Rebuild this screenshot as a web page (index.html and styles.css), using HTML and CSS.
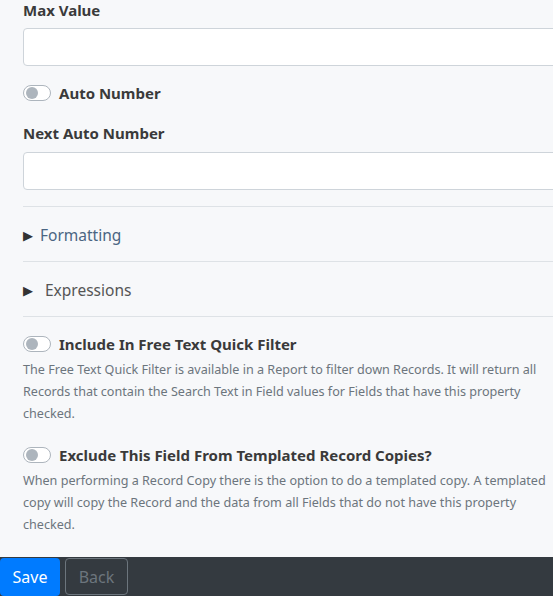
FILE: index.html
```html
<!DOCTYPE html>
<html lang="en">
<head>
    <meta charset="UTF-8">
    <meta name="viewport" content="width=device-width, initial-scale=1.0">
    <title>Field Properties</title>
    <link rel="stylesheet" href="styles.css">
</head>
<body>
    <div class="form">
        <!-- 数值字段 -->
        <label class="label">Max Value</label>
        <input class="input" type="text">

        <div class="switch-row">
            <span class="switch"></span>
            <span class="switch-label">Auto Number</span>
        </div>

        <label class="label label-next">Next Auto Number</label>
        <input class="input" type="text">

        <!-- 折叠区域 -->
        <div class="sections">
            <div class="section">
                <span class="arrow">&#9654;</span>
                <span class="section-link">Formatting</span>
            </div>
            <div class="section">
                <span class="arrow">&#9654;</span>
                <span class="section-text">Expressions</span>
            </div>
        </div>

        <div class="option">
            <div class="switch-row">
                <span class="switch"></span>
                <span class="switch-label">Include In Free Text Quick Filter</span>
            </div>
            <p class="help">The Free Text Quick Filter is available in a Report to filter down Records. It will return all Records that contain the Search Text in Field values for Fields that have this property checked.</p>
        </div>

        <div class="option option-last">
            <div class="switch-row">
                <span class="switch"></span>
                <span class="switch-label">Exclude This Field From Templated Record Copies?</span>
            </div>
            <p class="help">When performing a Record Copy there is the option to do a templated copy. A templated copy will copy the Record and the data from all Fields that do not have this property checked.</p>
        </div>
    </div>

    <div class="footer">
        <a class="btn btn-save" href="javascript:;">Save</a>
        <a class="btn btn-back" href="javascript:;">Back</a>
    </div>
</body>
</html>
```

FILE: styles.css
```css
* {
    margin: 0;
    padding: 0;
    box-sizing: border-box;
}
body {
    width: 553px;
    height: 596px;
    overflow: hidden;
    background-color: #f7f8fa;
    font-family: "Noto Sans", "Open Sans", sans-serif;
    color: #3a3a3a;
    display: flex;
    flex-direction: column;
}
.form {
    width: 600px;
    padding-left: 23px;
    flex: 1;
}
.label {
    display: block;
    font-size: 15px;
    font-weight: 700;
    line-height: 20px;
    margin-bottom: 8px;
}
.label-next {
    margin-top: 18px;
    margin-bottom: 9px;
}
.input {
    display: block;
    width: 100%;
    height: 38px;
    border: 1px solid #ced4da;
    border-radius: 4px;
    background-color: #fff;
}
.switch-row {
    display: flex;
    align-items: center;
    height: 24px;
    margin-top: 15px;
}
.switch {
    width: 28px;
    height: 16px;
    border: 1px solid #adb5bd;
    border-radius: 8px;
    background-color: #fff;
    position: relative;
    margin-right: 8px;
}
.switch::after {
    content: "";
    position: absolute;
    left: 2px;
    top: 1px;
    width: 12px;
    height: 12px;
    border-radius: 50%;
    background-color: #adb5bd;
}
.switch-label {
    font-size: 15px;
    font-weight: 700;
}
/* 
    折叠区域
*/
.sections {
    margin-top: 16px;
    border-bottom: 1px solid #dee2e6;
}
.section {
    display: flex;
    align-items: center;
    height: 55px;
    padding-top: 1px;
    font-size: 15.5px;
    border-top: 1px solid #dee2e6;
}
.arrow {
    font-size: 13px;
    color: #333;
    width: 17px;
}
.section-link {
    color: #4a6582;
}
.section-text {
    color: #555;
    margin-left: 5px;
}
.option .switch-row {
    margin-top: 16px;
    height: 22px;
}
.option-last .switch-row {
    margin-top: 19px;
}
.help {
    margin-top: 4px;
    width: 530px;
    font-size: 12.6px;
    line-height: 22px;
    color: #6c757d;
}
.footer {
    height: 39px;
    background-color: #343a40;
    display: flex;
    align-items: center;
    gap: 5px;
}
.btn {
    display: flex;
    align-items: center;
    justify-content: center;
    height: 38px;
    font-size: 16px;
    text-decoration: none;
    border-radius: 4px;
}
.btn-save {
    width: 60px;
    background-color: #007bff;
    color: #fff;
}
.btn-back {
    width: 63px;
    height: 37px;
    border: 1px solid #6c757d;
    color: #6c757d;
}
```
